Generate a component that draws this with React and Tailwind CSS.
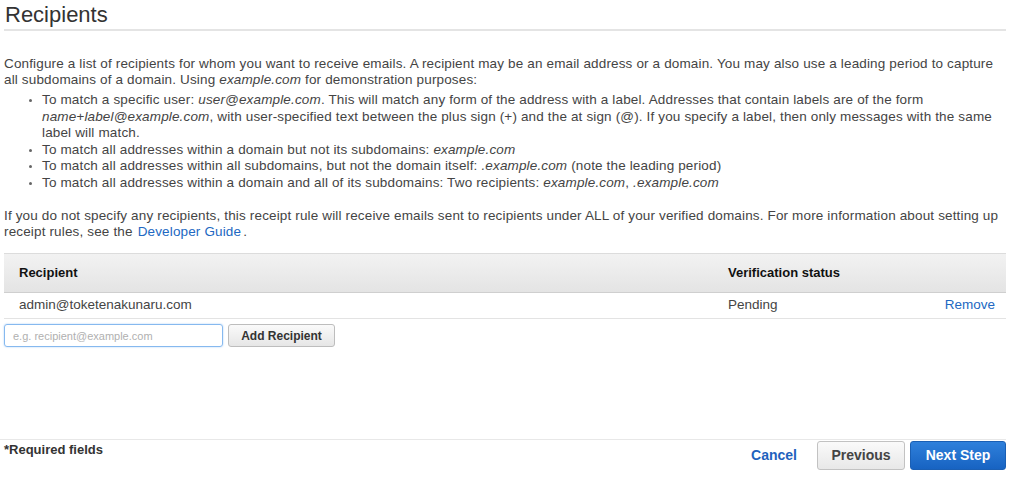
export default function App() {
  const font = { fontFamily: '"Liberation Sans", Arial, Helvetica, sans-serif' };
  return (
    <div className="w-[1024px] h-[486px] bg-white text-[#444] text-[13.5px] tracking-[0.15px] overflow-hidden" style={font}>
      <div className="pl-[4px] pr-[18px]">
        <div className="h-[31px] border-b-2 border-[#e4e4e4] flex items-end">
          <h2 className="text-[22px] leading-[28px] tracking-normal text-[#333] pl-[1px]">Recipients</h2>
        </div>

        <p className="mt-[25px] leading-[16px]">
          Configure a list of recipients for whom you want to receive emails. A recipient may be an email address or a domain. You may also use a leading period to capture all subdomains of a domain. Using <i>example.com</i> for demonstration purposes:
        </p>

        <ul className="mt-[4px] pl-[38px] list-disc leading-[16.5px] marker:text-[#666] marker:text-[10px]">
          <li>
            To match a specific user: <i>user@example.com</i>. This will match any form of the address with a label. Addresses that contain labels are of the form <i>name+label@example.com</i>, with user-specified text between the plus sign (+) and the at sign (@). If you specify a label, then only messages with the same label will match.
          </li>
          <li>To match all addresses within a domain but not its subdomains: <i>example.com</i></li>
          <li>To match all addresses within all subdomains, but not the domain itself: <i>.example.com</i> (note the leading period)</li>
          <li>To match all addresses within a domain and all of its subdomains: Two recipients: <i>example.com</i>, <i>.example.com</i></li>
        </ul>

        <p className="mt-[17px] leading-[16px]">
          If you do not specify any recipients, this receipt rule will receive emails sent to recipients under ALL of your verified domains. For more information about setting up receipt rules, see the<a className="text-[#2168c2] ml-[5px] mr-[2px]">Developer Guide</a>.
        </p>

        <div className="mt-[13px] text-[13px] tracking-normal">
          <div className="h-[40px] flex items-center bg-gradient-to-b from-[#f2f2f2] to-[#e4e4e4] border-t border-[#dcdcdc] border-b border-b-[#cfcfcf] font-bold text-[#111]">
            <div className="w-[709px] pl-[15px]">Recipient</div>
            <div className="flex-1 pl-[15px]">Verification status</div>
          </div>
          <div className="h-[26px] flex items-center border-b border-[#e3e3e3] text-[13.5px]">
            <div className="w-[709px] pl-[15px]">admin@toketenakunaru.com</div>
            <div className="flex-1 pl-[15px]">Pending</div>
            <a className="text-[#2168c2] pr-[11px]">Remove</a>
          </div>
        </div>

        <div className="mt-[5px] flex items-center gap-[5px] tracking-normal">
          <input
            className="w-[219px] h-[23px] border border-[#86b9ef] rounded-[3px] px-[8px] text-[11px] placeholder:text-[#b0b0b0] outline-none shadow-[0_0_2px_#a9cdf5]"
            placeholder="e.g. recipient@example.com"
          />
          <button className="w-[107px] h-[23px] border border-[#bdbdbd] rounded-[3px] bg-gradient-to-b from-[#fafafa] to-[#e6e6e6] text-[12px] font-bold text-[#333]">
            Add Recipient
          </button>
        </div>
      </div>

      <div className="mt-[92px] border-t border-[#e8e8e8] w-[1006px] flex justify-between tracking-normal">
        <div className="pl-[4px] pt-[2px] font-bold text-[#333] text-[13px] leading-[16px]">*Required fields</div>
        <div className="flex items-center pt-[1px]">
          <a className="text-[14px] font-bold text-[#1f62bd] mr-[20px]">Cancel</a>
          <button className="w-[88px] h-[29px] border border-[#c2c2c2] rounded-[3px] bg-gradient-to-b from-[#fafafa] to-[#e8e8e8] text-[14px] font-bold text-[#444]">
            Previous
          </button>
          <button className="ml-[5px] w-[96px] h-[29px] border border-[#1a5fb4] rounded-[3px] bg-gradient-to-b from-[#2f80db] to-[#1763c2] text-[14px] font-bold text-white">
            Next Step
          </button>
        </div>
      </div>
    </div>
  );
}
